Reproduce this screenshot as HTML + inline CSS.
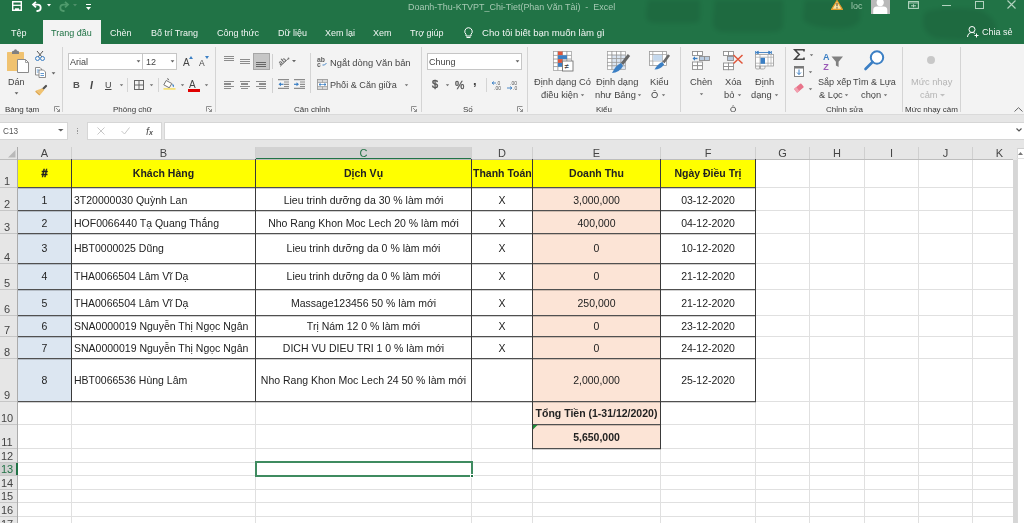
<!DOCTYPE html><html><head><meta charset="utf-8"><style>
html,body{margin:0;padding:0}
body{width:1024px;height:523px;overflow:hidden;position:relative;background:#e6e6e6;font-family:"Liberation Sans",sans-serif}
.t{position:absolute;white-space:nowrap;will-change:transform}
.b{position:absolute;box-sizing:border-box}
.s{position:absolute;overflow:visible}
</style></head><body>
<div class="b" style="left:0px;top:0px;width:1024px;height:44px;background:#217346"></div>
<svg class="s" style="left:600px;top:0px" width="424" height="44" viewBox="0 0 424 44"><defs><filter id="bl"><feGaussianBlur stdDeviation="2"/></filter></defs><g fill="#000" opacity="0.075" filter="url(#bl)"><path d="M48 0 H100 V18 Q100 23 92 23 H56 Q46 23 46 15Z"/><path d="M115 0 H183 V25 Q183 32 170 32 H125 Q113 32 113 22Z"/><path d="M205 0 H260 V20 Q255 30 230 28 Q205 26 203 18Z"/><path d="M325 12 Q345 5 380 10 Q400 20 395 35 Q370 42 335 38 Q318 30 325 12Z"/></g></svg>
<svg class="s" style="left:12px;top:1px" width="10" height="10" viewBox="0 0 10 10"><path d="M0.7 0.7 H9.3 V9.3 H0.7Z" fill="none" stroke="#fff" stroke-width="1.4"/><path d="M0.7 4.3 H9.3" stroke="#fff" stroke-width="1.3"/><rect x="3" y="7.3" width="4" height="2" fill="#fff"/></svg>
<svg class="s" style="left:32px;top:1px" width="11" height="10" viewBox="0 0 11 10"><path d="M4 0.8 L1 3.6 L4 6.4" fill="none" stroke="#fff" stroke-width="1.8"/><path d="M1.5 3.6 H5.5 A3.2 3.2 0 0 1 5.5 10 H4.5" fill="none" stroke="#fff" stroke-width="1.8"/></svg>
<svg class="s" style="left:47px;top:4px" width="4" height="3" viewBox="0 0 4 3"><path d="M0 0 H4 L2 2.5Z" fill="#fff"/></svg>
<svg class="s" style="left:58px;top:1px" width="11" height="10" viewBox="0 0 11 10"><path d="M7 0.8 L10 3.6 L7 6.4" fill="none" stroke="#4f9a6c" stroke-width="1.8"/><path d="M9.5 3.6 H5.5 A3.2 3.2 0 0 0 5.5 10 H6.5" fill="none" stroke="#4f9a6c" stroke-width="1.8"/></svg>
<svg class="s" style="left:73px;top:4px" width="4" height="3" viewBox="0 0 4 3"><path d="M0 0 H4 L2 2.5Z" fill="#4f8f6a"/></svg>
<svg class="s" style="left:86px;top:4px" width="5" height="7" viewBox="0 0 5 7"><path d="M0 0.5 H5" stroke="#fff" stroke-width="1"/><path d="M0 3 H5 L2.5 6Z" fill="#fff"/></svg>
<div class="t" style="left:408px;top:1.0px;font-size:8.95px;line-height:12px;color:#a6c9b3;">Doanh-Thu-KTVPT_Chi-Tiet(Phan Văn Tài)&nbsp; -&nbsp; Excel</div>
<svg class="s" style="left:831px;top:0px" width="12" height="10" viewBox="0 0 12 10"><path d="M6 0.6 L11.4 9.4 H0.6Z" fill="#f7e3a8" stroke="#e39a2a" stroke-width="1.2" stroke-linejoin="round"/><path d="M6 3 V6.3 M6 7.3 V8.4" stroke="#6b5a3a" stroke-width="1.2"/></svg>
<div class="t" style="left:851px;top:0.0px;font-size:9px;line-height:12px;color:#9cc8ac;">loc</div>
<div class="b" style="left:871px;top:0px;width:19px;height:14px;background:#b9b9b9"></div>
<svg class="s" style="left:871px;top:0px" width="19" height="14" viewBox="0 0 19 14"><circle cx="9.2" cy="2.6" r="3.6" fill="#fff"/><path d="M2.2 14 V10 Q2.2 6.5 6 6.5 H12.5 Q16.3 6.5 16.3 10 V14Z" fill="#fff"/></svg>
<svg class="s" style="left:908px;top:1px" width="11" height="8" viewBox="0 0 11 8"><rect x="0.6" y="0.6" width="9.8" height="6.8" fill="none" stroke="#b5d6c1" stroke-width="1.1"/><path d="M0.6 2 H10.4" stroke="#b5d6c1" stroke-width="0.8"/><path d="M3 4.8 H8 M5.5 3.3 V6.3" stroke="#b5d6c1" stroke-width="1"/></svg>
<div class="b" style="left:942px;top:5px;width:9px;height:1px;background:#b3d2bf"></div>
<div class="b" style="left:975px;top:1px;width:9px;height:8px;border:1px solid #b3d2bf"></div>
<svg class="s" style="left:1007px;top:0px" width="9" height="9" viewBox="0 0 9 9"><path d="M0.5 0.5 L8.5 8.5 M8.5 0.5 L0.5 8.5" stroke="#b3d2bf" stroke-width="1.1"/></svg>
<div class="b" style="left:43px;top:20px;width:58px;height:24px;background:#f3f3f3"></div>
<div class="t" style="left:10.7px;top:27.0px;font-size:9px;line-height:12px;color:#f0f5f2;">Tệp</div>
<div class="t" style="left:51.2px;top:27.0px;font-size:9px;line-height:12px;color:#217346;">Trang đầu</div>
<div class="t" style="left:110.4px;top:27.0px;font-size:9px;line-height:12px;color:#f0f5f2;">Chèn</div>
<div class="t" style="left:150.8px;top:27.0px;font-size:9px;line-height:12px;color:#f0f5f2;">Bố trí Trang</div>
<div class="t" style="left:216.7px;top:27.0px;font-size:9px;line-height:12px;color:#f0f5f2;">Công thức</div>
<div class="t" style="left:278.2px;top:27.0px;font-size:9px;line-height:12px;color:#f0f5f2;">Dữ liệu</div>
<div class="t" style="left:325px;top:27.0px;font-size:9px;line-height:12px;color:#f0f5f2;">Xem lại</div>
<div class="t" style="left:373.1px;top:27.0px;font-size:9px;line-height:12px;color:#f0f5f2;">Xem</div>
<div class="t" style="left:410px;top:27.0px;font-size:9px;line-height:12px;color:#f0f5f2;">Trợ giúp</div>
<svg class="s" style="left:464px;top:27px" width="9" height="12" viewBox="0 0 9 12"><path d="M4.5 0.7 A3.8 3.8 0 0 1 7 7.3 V9 H2 V7.3 A3.8 3.8 0 0 1 4.5 0.7Z" fill="none" stroke="#fff" stroke-width="1"/><path d="M2.5 10.5 H6.5" stroke="#fff" stroke-width="1"/></svg>
<div class="t" style="left:481.5px;top:26.5px;font-size:9.6px;line-height:12px;color:#f0f5f2;">Cho tôi biết bạn muốn làm gì</div>
<svg class="s" style="left:967px;top:26px" width="12" height="12" viewBox="0 0 12 12"><circle cx="5" cy="3.5" r="3" fill="none" stroke="#fff" stroke-width="1"/><path d="M0.5 11 Q1 6.5 5 6.5 Q7 6.5 8 7.5" fill="none" stroke="#fff" stroke-width="1"/><path d="M9.5 7.5 V11.5 M7.5 9.5 H11.5" stroke="#fff" stroke-width="1"/></svg>
<div class="t" style="left:981.7px;top:26.200000000000003px;font-size:9px;line-height:12px;color:#f0f5f2;">Chia sẻ</div>
<div class="b" style="left:0px;top:44px;width:1024px;height:71px;background:#f3f3f3;border-bottom:1px solid #dadada"></div>
<div class="b" style="left:62px;top:47px;width:1px;height:65px;background:#d4d4d4"></div>
<div class="b" style="left:215px;top:47px;width:1px;height:65px;background:#d4d4d4"></div>
<div class="b" style="left:421px;top:47px;width:1px;height:65px;background:#d4d4d4"></div>
<div class="b" style="left:527px;top:47px;width:1px;height:65px;background:#d4d4d4"></div>
<div class="b" style="left:680px;top:47px;width:1px;height:65px;background:#d4d4d4"></div>
<div class="b" style="left:785px;top:47px;width:1px;height:65px;background:#d4d4d4"></div>
<div class="b" style="left:902px;top:47px;width:1px;height:65px;background:#d4d4d4"></div>
<div class="b" style="left:960px;top:47px;width:1px;height:65px;background:#d4d4d4"></div>
<div class="t" style="left:5px;top:105.0px;font-size:8px;line-height:10px;color:#383838;">Bảng tạm</div>
<div class="t" style="left:112.8px;top:105.0px;font-size:8px;line-height:10px;color:#383838;">Phông chữ</div>
<div class="t" style="left:293.8px;top:105.0px;font-size:8px;line-height:10px;color:#383838;">Căn chỉnh</div>
<div class="t" style="left:463px;top:105.0px;font-size:8px;line-height:10px;color:#383838;">Số</div>
<div class="t" style="left:596px;top:105.0px;font-size:8px;line-height:10px;color:#383838;">Kiểu</div>
<div class="t" style="left:730px;top:105.0px;font-size:8px;line-height:10px;color:#383838;">Ô</div>
<div class="t" style="left:826px;top:105.0px;font-size:8px;line-height:10px;color:#383838;">Chỉnh sửa</div>
<div class="t" style="left:905px;top:105.0px;font-size:8px;line-height:10px;color:#383838;">Mức nhạy cảm</div>
<svg class="s" style="left:53.5px;top:105.5px" width="6" height="6" viewBox="0 0 6 6"><path d="M0.5 5.5 V0.5 H5.5" fill="none" stroke="#777" stroke-width="0.8"/><path d="M2 2 L5.5 5.5 M5.5 3 V5.5 H3" fill="none" stroke="#777" stroke-width="0.8"/></svg>
<svg class="s" style="left:205.5px;top:105.5px" width="6" height="6" viewBox="0 0 6 6"><path d="M0.5 5.5 V0.5 H5.5" fill="none" stroke="#777" stroke-width="0.8"/><path d="M2 2 L5.5 5.5 M5.5 3 V5.5 H3" fill="none" stroke="#777" stroke-width="0.8"/></svg>
<svg class="s" style="left:410.5px;top:105.5px" width="6" height="6" viewBox="0 0 6 6"><path d="M0.5 5.5 V0.5 H5.5" fill="none" stroke="#777" stroke-width="0.8"/><path d="M2 2 L5.5 5.5 M5.5 3 V5.5 H3" fill="none" stroke="#777" stroke-width="0.8"/></svg>
<svg class="s" style="left:516.5px;top:105.5px" width="6" height="6" viewBox="0 0 6 6"><path d="M0.5 5.5 V0.5 H5.5" fill="none" stroke="#777" stroke-width="0.8"/><path d="M2 2 L5.5 5.5 M5.5 3 V5.5 H3" fill="none" stroke="#777" stroke-width="0.8"/></svg>
<svg class="s" style="left:7px;top:49px" width="22" height="25" viewBox="0 0 22 25"><rect x="0" y="3" width="17" height="19" rx="0.5" fill="#f0c270"/><path d="M5 5 V3 Q5 1.8 6.5 1.8 H7 Q7 0.3 8.5 0.3 Q10 0.3 10 1.8 H10.5 Q12 1.8 12 3 V5Z" fill="#808080"/><path d="M10.5 10.5 H18.5 L21.5 13.5 V23.5 H10.5Z" fill="#fff" stroke="#8a8a8a" stroke-width="1"/><path d="M18.5 10.5 V13.5 H21.5" fill="none" stroke="#8a8a8a" stroke-width="0.8"/></svg>
<div class="t" style="left:8.4px;top:76.0px;font-size:9px;line-height:12px;color:#444;">Dán</div>
<svg class="s" style="left:14px;top:92px" width="5" height="3" viewBox="0 0 5 3"><path d="M0.6 0.2 H4.4 L2.5 2.4Z" fill="#606060"/></svg>
<svg class="s" style="left:35px;top:51px" width="10" height="10" viewBox="0 0 10 10"><path d="M2 0 L7 6 M8 0 L3 6" stroke="#555" stroke-width="1"/><circle cx="2.5" cy="7.5" r="2" fill="none" stroke="#3b7fc4" stroke-width="1"/><circle cx="7.5" cy="7.5" r="2" fill="none" stroke="#3b7fc4" stroke-width="1"/></svg>
<svg class="s" style="left:35px;top:67px" width="11" height="11" viewBox="0 0 11 11"><path d="M0.5 0.5 H5 L6.5 2 V8 H0.5Z" fill="#fff" stroke="#808080" stroke-width="0.9"/><path d="M4 3 H8.5 L10.5 5 V10.5 H4Z" fill="#fff" stroke="#808080" stroke-width="0.9"/><path d="M1.8 3 H4 M1.8 5 H3.5 M5.5 6.5 H9 M5.5 8.5 H9" stroke="#3b7fc4" stroke-width="0.8"/></svg>
<svg class="s" style="left:51px;top:72px" width="5" height="3" viewBox="0 0 5 3"><path d="M0.6 0.2 H4.4 L2.5 2.4Z" fill="#606060"/></svg>
<svg class="s" style="left:35px;top:85px" width="12" height="11" viewBox="0 0 12 11"><path d="M11 1 L7 5" stroke="#505050" stroke-width="2.2" stroke-linecap="round"/><path d="M7.5 3.3 L9.2 5 L5.5 9.5 L1 5.5Z" fill="#f0c270"/><path d="M1 5.5 L5.5 9.5 L4.3 10.5 L0.2 6.8Z" fill="#e0a850"/></svg>
<div class="b" style="left:68px;top:53px;width:75px;height:17px;background:#fff;border:1px solid #c6c6c6"></div>
<div class="b" style="left:142px;top:53px;width:35px;height:17px;background:#fff;border:1px solid #c6c6c6"></div>
<div class="t" style="left:70px;top:56.0px;font-size:9px;line-height:12px;color:#444;">Arial</div>
<div class="t" style="left:146px;top:56.0px;font-size:9px;line-height:12px;color:#444;">12</div>
<svg class="s" style="left:136px;top:60px" width="5" height="3" viewBox="0 0 5 3"><path d="M0.6 0.2 H4.4 L2.5 2.4Z" fill="#606060"/></svg>
<svg class="s" style="left:170px;top:60px" width="5" height="3" viewBox="0 0 5 3"><path d="M0.6 0.2 H4.4 L2.5 2.4Z" fill="#606060"/></svg>
<div class="t" style="left:182.5px;top:55.5px;font-size:10px;line-height:13px;color:#444;">A</div>
<svg class="s" style="left:189px;top:56px" width="4" height="3" viewBox="0 0 4 3"><path d="M0 3 L2 0 L4 3Z" fill="#3b7fc4"/></svg>
<div class="t" style="left:199px;top:57.5px;font-size:8.5px;line-height:11px;color:#444;">A</div>
<svg class="s" style="left:205px;top:56px" width="4" height="3" viewBox="0 0 4 3"><path d="M0 0 L2 3 L4 0Z" fill="#3b7fc4"/></svg>
<div class="t" style="left:72.5px;top:79.0px;font-size:9.5px;line-height:12px;color:#555;font-weight:bold;">B</div>
<div class="t" style="left:90px;top:78.0px;font-size:10.5px;line-height:14px;color:#444;font-weight:bold;font-family:"Liberation Serif";"><i>I</i></div>
<div class="t" style="left:105px;top:79.0px;font-size:9px;line-height:12px;color:#444;"><u>U</u></div>
<svg class="s" style="left:119px;top:84px" width="5" height="3" viewBox="0 0 5 3"><path d="M0.8 0.3 H4.2 L2.5 2.3Z" fill="#707070"/></svg>
<svg class="s" style="left:149px;top:84px" width="5" height="3" viewBox="0 0 5 3"><path d="M0.8 0.3 H4.2 L2.5 2.3Z" fill="#707070"/></svg>
<svg class="s" style="left:180px;top:84px" width="5" height="3" viewBox="0 0 5 3"><path d="M0.8 0.3 H4.2 L2.5 2.3Z" fill="#707070"/></svg>
<svg class="s" style="left:204px;top:84px" width="5" height="3" viewBox="0 0 5 3"><path d="M0.8 0.3 H4.2 L2.5 2.3Z" fill="#707070"/></svg>
<div class="b" style="left:127px;top:78px;width:1px;height:14px;background:#d4d4d4"></div>
<div class="b" style="left:158px;top:78px;width:1px;height:14px;background:#d4d4d4"></div>
<svg class="s" style="left:134px;top:80px" width="10" height="10" viewBox="0 0 10 10"><rect x="0.5" y="0.5" width="9" height="9" fill="none" stroke="#666" stroke-width="1"/><path d="M5 0.5 V9.5 M0.5 5 H9.5" stroke="#666" stroke-width="1"/></svg>
<svg class="s" style="left:163px;top:78px" width="13" height="12" viewBox="0 0 13 12"><path d="M4 0.8 Q5.5 0.3 5.8 2.2" fill="none" stroke="#666" stroke-width="0.9"/><path d="M3.2 2.5 L8.8 5.5 L6.3 9.8 L0.8 6.8Z" fill="#fff" stroke="#666" stroke-width="0.9"/><path d="M9.3 5.8 Q12 7.5 10.5 9.3 Q9.3 8.5 9.3 5.8Z" fill="#3b7fc4"/><rect x="0.5" y="10" width="12" height="1.8" fill="#f5e27a"/></svg>
<div class="t" style="left:189px;top:77.5px;font-size:10px;line-height:13px;color:#444;">A</div>
<div class="b" style="left:188px;top:89px;width:12px;height:3px;background:#e00000"></div>
<div class="b" style="left:224px;top:55.6px;width:9.5px;height:1.3px;background:#8c8c8c"></div><div class="b" style="left:224px;top:57.8px;width:9.5px;height:1.3px;background:#8c8c8c"></div><div class="b" style="left:224px;top:60px;width:9.5px;height:1.3px;background:#8c8c8c"></div>
<div class="b" style="left:240.2px;top:58.6px;width:9.5px;height:1.3px;background:#8c8c8c"></div><div class="b" style="left:240.2px;top:60.8px;width:9.5px;height:1.3px;background:#8c8c8c"></div><div class="b" style="left:240.2px;top:63px;width:9.5px;height:1.3px;background:#8c8c8c"></div>
<div class="b" style="left:253px;top:53px;width:16.5px;height:17px;background:#c6c6c6;border:1px solid #a6a6a6"></div>
<div class="b" style="left:256.3px;top:62px;width:9.8px;height:1.3px;background:#666"></div><div class="b" style="left:256.3px;top:64px;width:9.8px;height:1.3px;background:#666"></div><div class="b" style="left:256.3px;top:66.2px;width:9.8px;height:1.3px;background:#666"></div>
<div class="b" style="left:272px;top:54px;width:1px;height:15px;background:#d0d0d0"></div>
<svg class="s" style="left:277px;top:55px" width="20" height="12" viewBox="0 0 20 12"><g transform="rotate(-40 6 6)"><text x="1" y="8" font-size="7" fill="#666" font-family="Liberation Sans" font-weight="bold">ab</text></g><path d="M3 11.5 L11.5 3.5" stroke="#777" stroke-width="0.9"/><circle cx="11.5" cy="3.5" r="0.9" fill="#777"/><path d="M15 5 H19 L17 7.3Z" fill="#666"/></svg>
<div class="b" style="left:310px;top:53px;width:1px;height:40px;background:#d4d4d4"></div>
<svg class="s" style="left:317px;top:56px" width="11" height="11" viewBox="0 0 11 11"><text x="0" y="5.6" font-size="6.8" font-weight="bold" fill="#606060" font-family="Liberation Sans">ab</text><text x="0" y="10.6" font-size="6.8" font-weight="bold" fill="#606060" font-family="Liberation Sans">c</text><path d="M5.5 9 H7.5 L9.5 7" fill="none" stroke="#3b7fc4" stroke-width="0.9"/></svg>
<div class="t" style="left:330px;top:56.5px;font-size:9.35px;line-height:12px;color:#444;">Ngắt dòng Văn bản</div>
<div class="b" style="left:224px;top:81.2px;width:9.5px;height:1.3px;background:#8c8c8c"></div><div class="b" style="left:224px;top:83.4px;width:7px;height:1.3px;background:#8c8c8c"></div><div class="b" style="left:224px;top:85.6px;width:9.5px;height:1.3px;background:#8c8c8c"></div><div class="b" style="left:224px;top:87.8px;width:7px;height:1.3px;background:#8c8c8c"></div>
<div class="b" style="left:240.2px;top:81.2px;width:9.5px;height:1.3px;background:#8c8c8c"></div><div class="b" style="left:241.45px;top:83.4px;width:7px;height:1.3px;background:#8c8c8c"></div><div class="b" style="left:240.2px;top:85.6px;width:9.5px;height:1.3px;background:#8c8c8c"></div><div class="b" style="left:241.45px;top:87.8px;width:7px;height:1.3px;background:#8c8c8c"></div>
<div class="b" style="left:256.3px;top:81.2px;width:9.5px;height:1.3px;background:#8c8c8c"></div><div class="b" style="left:258.8px;top:83.4px;width:7px;height:1.3px;background:#8c8c8c"></div><div class="b" style="left:256.3px;top:85.6px;width:9.5px;height:1.3px;background:#8c8c8c"></div><div class="b" style="left:258.8px;top:87.8px;width:7px;height:1.3px;background:#8c8c8c"></div>
<div class="b" style="left:272px;top:78px;width:1px;height:15px;background:#d0d0d0"></div>
<svg class="s" style="left:278px;top:79px" width="11" height="10" viewBox="0 0 11 10"><path d="M0 0.6 H11 M6 3 H11 M6 5.3 H11 M6 7.5 H11 M0 9.4 H11" stroke="#8c8c8c" stroke-width="1.2"/><path d="M0.5 5.3 L3 3.3 V7.3Z" fill="#3b7fc4"/><path d="M2 5.3 H5.5" stroke="#3b7fc4" stroke-width="1.2"/></svg>
<svg class="s" style="left:294px;top:79px" width="11" height="10" viewBox="0 0 11 10"><path d="M0 0.6 H11 M6 3 H11 M6 5.3 H11 M6 7.5 H11 M0 9.4 H11" stroke="#8c8c8c" stroke-width="1.2"/><path d="M5 5.3 L2.5 3.3 V7.3Z" fill="#3b7fc4"/><path d="M0 5.3 H3.5" stroke="#3b7fc4" stroke-width="1.2"/></svg>
<svg class="s" style="left:316.5px;top:79px" width="11" height="11" viewBox="0 0 11 11"><rect x="0.5" y="0.5" width="10" height="10" fill="#fff" stroke="#9a9a9a" stroke-width="0.9"/><rect x="1" y="1" width="9" height="2.5" fill="#d8d8d8"/><rect x="1" y="7.5" width="9" height="2.5" fill="#d8d8d8"/><path d="M0.5 3.5 H10.5 M0.5 7.5 H10.5 M5.5 0.5 V3.5 M5.5 7.5 V10.5" stroke="#9a9a9a" stroke-width="0.7"/><path d="M2 5.5 H9 M2 5.5 L3.3 4.5 V6.5Z M9 5.5 L7.7 4.5 V6.5Z" stroke="#3b7fc4" stroke-width="0.7" fill="#3b7fc4"/></svg>
<div class="t" style="left:330px;top:79.0px;font-size:9.1px;line-height:12px;color:#444;">Phối &amp; Căn giữa</div>
<svg class="s" style="left:404px;top:84px" width="5" height="3" viewBox="0 0 5 3"><path d="M0.8 0.3 H4.2 L2.5 2.3Z" fill="#707070"/></svg>
<div class="b" style="left:426.5px;top:53px;width:95px;height:17px;background:#fff;border:1px solid #c6c6c6"></div>
<div class="t" style="left:429px;top:56.0px;font-size:9px;line-height:12px;color:#444;">Chung</div>
<svg class="s" style="left:515px;top:60px" width="5" height="3" viewBox="0 0 5 3"><path d="M0.6 0.2 H4.4 L2.5 2.4Z" fill="#606060"/></svg>
<svg class="s" style="left:432px;top:79px" width="8" height="11" viewBox="0 0 8 11"><text x="0" y="9.3" font-size="11" fill="#555" stroke="#555" stroke-width="0.45" font-family="Liberation Sans">$</text></svg>
<svg class="s" style="left:445px;top:84px" width="5" height="3" viewBox="0 0 5 3"><path d="M0.8 0.3 H4.2 L2.5 2.3Z" fill="#707070"/></svg>
<svg class="s" style="left:454.5px;top:80px" width="10" height="10" viewBox="0 0 10 10"><text x="0" y="8.5" font-size="10.5" fill="#555" stroke="#555" stroke-width="0.35" font-family="Liberation Sans">%</text></svg>
<div class="t" style="left:473.2px;top:72.0px;font-size:13px;line-height:17px;color:#444;font-weight:bold;">,</div>
<div class="b" style="left:486px;top:78px;width:1px;height:14px;background:#d4d4d4"></div>
<svg class="s" style="left:492px;top:80px" width="12" height="10" viewBox="0 0 12 10"><text x="4" y="4.5" font-size="5" fill="#555" font-family="Liberation Sans">.0</text><text x="2" y="10" font-size="5" fill="#555" font-family="Liberation Sans">.00</text><path d="M0 3 H4 M0 3 L2 1.5 M0 3 L2 4.5" stroke="#3b7fc4" stroke-width="0.9" fill="none"/></svg>
<svg class="s" style="left:507px;top:80px" width="12" height="10" viewBox="0 0 12 10"><text x="3" y="4.5" font-size="5" fill="#555" font-family="Liberation Sans">.00</text><text x="6" y="10" font-size="5" fill="#555" font-family="Liberation Sans">.0</text><path d="M0 8 H5 M5 8 L3 6.5 M5 8 L3 9.5" stroke="#3b7fc4" stroke-width="0.9" fill="none"/></svg>
<svg class="s" style="left:553px;top:51px" width="21" height="21" viewBox="0 0 21 21"><rect x="0.5" y="0.5" width="4.5" height="3.8" fill="#fff" stroke="#9a9a9a" stroke-width="0.7"/><rect x="5.0" y="0.5" width="4.5" height="3.8" fill="#fff" stroke="#9a9a9a" stroke-width="0.7"/><rect x="9.5" y="0.5" width="4.5" height="3.8" fill="#fff" stroke="#9a9a9a" stroke-width="0.7"/><rect x="14.0" y="0.5" width="4.5" height="3.8" fill="#fff" stroke="#9a9a9a" stroke-width="0.7"/><rect x="0.5" y="4.3" width="4.5" height="3.8" fill="#fff" stroke="#9a9a9a" stroke-width="0.7"/><rect x="5.0" y="4.3" width="4.5" height="3.8" fill="#fff" stroke="#9a9a9a" stroke-width="0.7"/><rect x="9.5" y="4.3" width="4.5" height="3.8" fill="#fff" stroke="#9a9a9a" stroke-width="0.7"/><rect x="14.0" y="4.3" width="4.5" height="3.8" fill="#fff" stroke="#9a9a9a" stroke-width="0.7"/><rect x="0.5" y="8.1" width="4.5" height="3.8" fill="#fff" stroke="#9a9a9a" stroke-width="0.7"/><rect x="5.0" y="8.1" width="4.5" height="3.8" fill="#fff" stroke="#9a9a9a" stroke-width="0.7"/><rect x="9.5" y="8.1" width="4.5" height="3.8" fill="#fff" stroke="#9a9a9a" stroke-width="0.7"/><rect x="14.0" y="8.1" width="4.5" height="3.8" fill="#fff" stroke="#9a9a9a" stroke-width="0.7"/><rect x="0.5" y="11.899999999999999" width="4.5" height="3.8" fill="#fff" stroke="#9a9a9a" stroke-width="0.7"/><rect x="5.0" y="11.899999999999999" width="4.5" height="3.8" fill="#fff" stroke="#9a9a9a" stroke-width="0.7"/><rect x="9.5" y="11.899999999999999" width="4.5" height="3.8" fill="#fff" stroke="#9a9a9a" stroke-width="0.7"/><rect x="14.0" y="11.899999999999999" width="4.5" height="3.8" fill="#fff" stroke="#9a9a9a" stroke-width="0.7"/><rect x="0.5" y="15.7" width="4.5" height="3.8" fill="#fff" stroke="#9a9a9a" stroke-width="0.7"/><rect x="5.0" y="15.7" width="4.5" height="3.8" fill="#fff" stroke="#9a9a9a" stroke-width="0.7"/><rect x="9.5" y="15.7" width="4.5" height="3.8" fill="#fff" stroke="#9a9a9a" stroke-width="0.7"/><rect x="14.0" y="15.7" width="4.5" height="3.8" fill="#fff" stroke="#9a9a9a" stroke-width="0.7"/><rect x="5" y="0.5" width="4.5" height="3.8" fill="#e0553a"/><rect x="5" y="4.3" width="9" height="3.8" fill="#3b7fc4"/><rect x="5" y="8.1" width="4.5" height="3.8" fill="#e0553a"/><rect x="5" y="11.9" width="4.5" height="3.8" fill="#3b7fc4"/><rect x="9.5" y="10" width="10.5" height="10" fill="#fff" stroke="#777" stroke-width="0.9"/><text x="11.5" y="18" font-size="8" fill="#333" font-family="Liberation Sans">≠</text></svg>
<div class="t" style="left:534.4px;top:76.0px;font-size:9.3px;line-height:12px;color:#444;">Định dạng Có</div>
<div class="t" style="left:541.4px;top:89.0px;font-size:9.3px;line-height:12px;color:#444;">điều kiện</div>
<svg class="s" style="left:580px;top:94px" width="5" height="3" viewBox="0 0 5 3"><path d="M0.8 0.3 H4.2 L2.5 2.3Z" fill="#707070"/></svg>
<svg class="s" style="left:607px;top:51px" width="24" height="23" viewBox="0 0 24 23"><rect x="0.5" y="0.5" width="4.5" height="3.6" fill="#fff" stroke="#9a9a9a" stroke-width="0.7"/><rect x="5.0" y="0.5" width="4.5" height="3.6" fill="#fff" stroke="#9a9a9a" stroke-width="0.7"/><rect x="9.5" y="0.5" width="4.5" height="3.6" fill="#fff" stroke="#9a9a9a" stroke-width="0.7"/><rect x="14.0" y="0.5" width="4.5" height="3.6" fill="#fff" stroke="#9a9a9a" stroke-width="0.7"/><rect x="0.5" y="4.1" width="4.5" height="3.6" fill="#fff" stroke="#9a9a9a" stroke-width="0.7"/><rect x="5.0" y="4.1" width="4.5" height="3.6" fill="#dbe5f1" stroke="#9a9a9a" stroke-width="0.7"/><rect x="9.5" y="4.1" width="4.5" height="3.6" fill="#dbe5f1" stroke="#9a9a9a" stroke-width="0.7"/><rect x="14.0" y="4.1" width="4.5" height="3.6" fill="#dbe5f1" stroke="#9a9a9a" stroke-width="0.7"/><rect x="0.5" y="7.7" width="4.5" height="3.6" fill="#fff" stroke="#9a9a9a" stroke-width="0.7"/><rect x="5.0" y="7.7" width="4.5" height="3.6" fill="#dbe5f1" stroke="#9a9a9a" stroke-width="0.7"/><rect x="9.5" y="7.7" width="4.5" height="3.6" fill="#dbe5f1" stroke="#9a9a9a" stroke-width="0.7"/><rect x="14.0" y="7.7" width="4.5" height="3.6" fill="#dbe5f1" stroke="#9a9a9a" stroke-width="0.7"/><rect x="0.5" y="11.3" width="4.5" height="3.6" fill="#fff" stroke="#9a9a9a" stroke-width="0.7"/><rect x="5.0" y="11.3" width="4.5" height="3.6" fill="#dbe5f1" stroke="#9a9a9a" stroke-width="0.7"/><rect x="9.5" y="11.3" width="4.5" height="3.6" fill="#dbe5f1" stroke="#9a9a9a" stroke-width="0.7"/><rect x="14.0" y="11.3" width="4.5" height="3.6" fill="#dbe5f1" stroke="#9a9a9a" stroke-width="0.7"/><rect x="0.5" y="14.9" width="4.5" height="3.6" fill="#fff" stroke="#9a9a9a" stroke-width="0.7"/><rect x="5.0" y="14.9" width="4.5" height="3.6" fill="#dbe5f1" stroke="#9a9a9a" stroke-width="0.7"/><rect x="9.5" y="14.9" width="4.5" height="3.6" fill="#dbe5f1" stroke="#9a9a9a" stroke-width="0.7"/><rect x="14.0" y="14.9" width="4.5" height="3.6" fill="#dbe5f1" stroke="#9a9a9a" stroke-width="0.7"/><path d="M22 4 L15 13" stroke="#666" stroke-width="3"/><path d="M14 12 Q9 14 5 22 Q12 22 16 15Z" fill="#3b7fc4"/></svg>
<div class="t" style="left:596px;top:76.0px;font-size:9.3px;line-height:12px;color:#444;">Định dạng</div>
<div class="t" style="left:595.3px;top:89.0px;font-size:9.3px;line-height:12px;color:#444;">như Bảng</div>
<svg class="s" style="left:637px;top:94px" width="5" height="3" viewBox="0 0 5 3"><path d="M0.8 0.3 H4.2 L2.5 2.3Z" fill="#707070"/></svg>
<svg class="s" style="left:649px;top:51px" width="21" height="20" viewBox="0 0 21 20"><rect x="0.5" y="0.5" width="17" height="14" fill="#fff" stroke="#9a9a9a" stroke-width="0.8"/><path d="M0.5 3.5 H17.5 M0.5 10 H17.5 M3.8 0.5 V14.5 M13.5 0.5 V14.5" stroke="#9a9a9a" stroke-width="0.7"/><rect x="4.2" y="3.9" width="9" height="5.8" fill="#c5d9ee"/><path d="M20 4 L14.5 11.5" stroke="#6a6a6a" stroke-width="2.6"/><path d="M13.2 11 Q9 12.5 5.5 18.5 Q11.5 18.5 15.2 13.5Z" fill="#3b7fc4"/></svg>
<div class="t" style="left:649.7px;top:76.0px;font-size:9.3px;line-height:12px;color:#444;">Kiểu</div>
<div class="t" style="left:651px;top:89.0px;font-size:9.3px;line-height:12px;color:#444;">Ô</div>
<svg class="s" style="left:661px;top:94px" width="5" height="3" viewBox="0 0 5 3"><path d="M0.8 0.3 H4.2 L2.5 2.3Z" fill="#707070"/></svg>
<svg class="s" style="left:691.5px;top:51px" width="20" height="19" viewBox="0 0 20 19"><rect x="0.5" y="0.5" width="5" height="4" fill="#fff" stroke="#8f8f8f" stroke-width="0.9"/><rect x="5.5" y="0.5" width="5" height="4" fill="#fff" stroke="#8f8f8f" stroke-width="0.9"/><rect x="7.5" y="5.5" width="5" height="4" fill="#b9cbe0" stroke="#8f8f8f" stroke-width="0.9"/><rect x="12.5" y="5.5" width="5" height="4" fill="#b9cbe0" stroke="#8f8f8f" stroke-width="0.9"/><path d="M0.5 7.5 L3 5.3 V9.7Z" fill="#3b7fc4"/><path d="M2.5 7.5 H5.5" stroke="#3b7fc4" stroke-width="1.4"/><rect x="0.5" y="11" width="5" height="3.7" fill="#fff" stroke="#8f8f8f" stroke-width="0.9"/><rect x="5.5" y="11" width="5" height="3.7" fill="#fff" stroke="#8f8f8f" stroke-width="0.9"/><rect x="0.5" y="14.7" width="5" height="3.7" fill="#fff" stroke="#8f8f8f" stroke-width="0.9"/><rect x="5.5" y="14.7" width="5" height="3.7" fill="#fff" stroke="#8f8f8f" stroke-width="0.9"/></svg>
<div class="t" style="left:690px;top:76.0px;font-size:9.3px;line-height:12px;color:#444;">Chèn</div>
<svg class="s" style="left:699px;top:93px" width="5" height="3" viewBox="0 0 5 3"><path d="M0.8 0.3 H4.2 L2.5 2.3Z" fill="#707070"/></svg>
<svg class="s" style="left:723px;top:51px" width="21" height="19" viewBox="0 0 21 19"><rect x="0.5" y="0.5" width="5" height="4" fill="#fff" stroke="#8f8f8f" stroke-width="0.9"/><rect x="5.5" y="0.5" width="5" height="4" fill="#fff" stroke="#8f8f8f" stroke-width="0.9"/><rect x="4.5" y="5.5" width="6" height="4" fill="#b9cbe0" stroke="#8f8f8f" stroke-width="0.9"/><rect x="0.5" y="12" width="5" height="3.5" fill="#fff" stroke="#8f8f8f" stroke-width="0.9"/><rect x="5.5" y="12" width="5" height="3.5" fill="#fff" stroke="#8f8f8f" stroke-width="0.9"/><rect x="0.5" y="15.5" width="5" height="3.2" fill="#fff" stroke="#8f8f8f" stroke-width="0.9"/><rect x="5.5" y="15.5" width="5" height="3.2" fill="#fff" stroke="#8f8f8f" stroke-width="0.9"/><path d="M10.5 4 L19.5 12.5 M19.5 4 L10.5 12.5" stroke="#e0553a" stroke-width="1.5"/></svg>
<div class="t" style="left:725px;top:76.0px;font-size:9.3px;line-height:12px;color:#444;">Xóa</div>
<div class="t" style="left:724px;top:89.0px;font-size:9.3px;line-height:12px;color:#444;">bỏ</div>
<svg class="s" style="left:737px;top:94px" width="5" height="3" viewBox="0 0 5 3"><path d="M0.8 0.3 H4.2 L2.5 2.3Z" fill="#707070"/></svg>
<svg class="s" style="left:755px;top:51px" width="20" height="21" viewBox="0 0 20 21"><path d="M0.5 0 V3 M16.5 0 V3" stroke="#3b7fc4" stroke-width="0.8"/><path d="M1 1.5 H16 M1 1.5 L3.3 0.2 V2.8Z M16 1.5 L13.7 0.2 V2.8Z" stroke="#3b7fc4" stroke-width="0.9" fill="#3b7fc4"/><rect x="0.5" y="3.5" width="18" height="11.5" fill="#fff" stroke="#9a9a9a" stroke-width="0.8"/><path d="M5 3.5 V15 M13 3.5 V15 M16 3.5 V15 M0.5 6.2 H18.5 M0.5 12.2 H18.5" stroke="#a8a8a8" stroke-width="0.7"/><rect x="5.5" y="6.8" width="4.5" height="6" fill="#3b7fc4"/><path d="M0.5 15 V17 Q0.5 18 2 18 H4.5 V15 M5.5 15 V18 H8.5 Q10 18 10 16.5 V15" fill="none" stroke="#9a9a9a" stroke-width="0.8"/></svg>
<div class="t" style="left:755px;top:76.0px;font-size:9.3px;line-height:12px;color:#444;">Định</div>
<div class="t" style="left:750.6px;top:89.0px;font-size:9.3px;line-height:12px;color:#444;">dạng</div>
<svg class="s" style="left:774px;top:94px" width="5" height="3" viewBox="0 0 5 3"><path d="M0.8 0.3 H4.2 L2.5 2.3Z" fill="#707070"/></svg>
<svg class="s" style="left:794px;top:49px" width="11" height="11" viewBox="0 0 11 11"><path d="M10 2.5 V0.8 H0.8 L5.2 5.5 L0.8 10.2 H10 V8.5" fill="none" stroke="#444" stroke-width="1.6" stroke-linejoin="miter"/></svg>
<svg class="s" style="left:809px;top:54px" width="5" height="3" viewBox="0 0 5 3"><path d="M0.8 0.3 H4.2 L2.5 2.3Z" fill="#707070"/></svg>
<svg class="s" style="left:794px;top:66px" width="10" height="11" viewBox="0 0 10 11"><rect x="0.5" y="0.5" width="9" height="10" fill="#fff" stroke="#777" stroke-width="0.9"/><rect x="0.5" y="0.5" width="9" height="2" fill="#777"/><path d="M5 3.5 V8.5 M3 6.5 L5 8.5 L7 6.5" stroke="#3b7fc4" stroke-width="1" fill="none"/></svg>
<svg class="s" style="left:808px;top:71px" width="5" height="3" viewBox="0 0 5 3"><path d="M0.8 0.3 H4.2 L2.5 2.3Z" fill="#707070"/></svg>
<svg class="s" style="left:794px;top:83px" width="10" height="10" viewBox="0 0 10 10"><g transform="rotate(-40 5 5)"><rect x="0.5" y="2.5" width="9" height="5" rx="0.8" fill="#e8748a"/><rect x="0.5" y="2.5" width="3" height="5" fill="#f2a0b0"/></g></svg>
<svg class="s" style="left:808px;top:88px" width="5" height="3" viewBox="0 0 5 3"><path d="M0.8 0.3 H4.2 L2.5 2.3Z" fill="#707070"/></svg>
<svg class="s" style="left:823px;top:51px" width="21" height="19" viewBox="0 0 21 19"><text x="0" y="8.6" font-size="9" font-weight="bold" fill="#3b7fc4" font-family="Liberation Sans">A</text><text x="0.3" y="18.6" font-size="9" font-weight="bold" fill="#9b59b6" font-family="Liberation Sans">Z</text><path d="M8.5 5.5 H20 L15.6 10.8 V16 L12.9 14.6 V10.8Z" fill="#808080"/></svg>
<div class="t" style="left:817.8px;top:76.0px;font-size:9.1px;line-height:12px;color:#444;">Sắp xếp</div>
<div class="t" style="left:819px;top:89.0px;font-size:9.3px;line-height:12px;color:#444;">&amp; Lọc</div>
<svg class="s" style="left:844px;top:94px" width="5" height="3" viewBox="0 0 5 3"><path d="M0.8 0.3 H4.2 L2.5 2.3Z" fill="#707070"/></svg>
<svg class="s" style="left:863.5px;top:50px" width="21" height="21" viewBox="0 0 21 21"><circle cx="13" cy="7.5" r="6.2" fill="#fff" stroke="#3b7fc4" stroke-width="2"/><path d="M8.5 12 L1.5 19" stroke="#3b7fc4" stroke-width="2.6" stroke-linecap="round"/></svg>
<div class="t" style="left:853.4px;top:76.0px;font-size:9.05px;line-height:12px;color:#444;">Tìm &amp; Lựa</div>
<div class="t" style="left:861px;top:89.0px;font-size:9.3px;line-height:12px;color:#444;">chọn</div>
<svg class="s" style="left:883px;top:94px" width="5" height="3" viewBox="0 0 5 3"><path d="M0.8 0.3 H4.2 L2.5 2.3Z" fill="#707070"/></svg>
<svg class="s" style="left:927px;top:56px" width="8" height="8" viewBox="0 0 8 8"><circle cx="4" cy="4" r="4" fill="#c8c8c8"/></svg>
<div class="t" style="left:911.3px;top:76.0px;font-size:9.3px;line-height:12px;color:#b5b5b5;">Mức nhạy</div>
<div class="t" style="left:920px;top:89.0px;font-size:9.3px;line-height:12px;color:#b5b5b5;">cảm</div>
<svg class="s" style="left:940px;top:94px" width="5" height="3" viewBox="0 0 5 3"><path d="M0 0 H5 L2.5 2.5Z" fill="#c0c0c0"/></svg>
<svg class="s" style="left:1014px;top:107px" width="9" height="5" viewBox="0 0 9 5"><path d="M0.5 4.5 L4.5 0.7 L8.5 4.5" fill="none" stroke="#666" stroke-width="1"/></svg>
<div class="b" style="left:-1px;top:122px;width:69px;height:18px;background:#fff;border:1px solid #d6d6d6"></div>
<div class="t" style="left:3.2px;top:126.0px;font-size:8.2px;line-height:11px;color:#555;">C13</div>
<svg class="s" style="left:57.5px;top:129px" width="6" height="3" viewBox="0 0 6 3"><path d="M0 0 H5.5 L2.75 2.6Z" fill="#606060"/></svg>
<div class="b" style="left:77px;top:127.7px;width:1.2px;height:1.3px;background:#999"></div>
<div class="b" style="left:77px;top:130.4px;width:1.2px;height:1.3px;background:#999"></div>
<div class="b" style="left:77px;top:133.1px;width:1.2px;height:1.3px;background:#999"></div>
<div class="b" style="left:87px;top:122px;width:75px;height:18px;background:#fff;border:1px solid #d6d6d6"></div>
<svg class="s" style="left:97px;top:127px" width="8" height="8" viewBox="0 0 8 8"><path d="M0.5 0.5 L7.5 7.5 M7.5 0.5 L0.5 7.5" stroke="#c8c8c8" stroke-width="1"/></svg>
<svg class="s" style="left:121px;top:127px" width="9" height="8" viewBox="0 0 9 8"><path d="M0.5 4 L3.5 7 L8.5 0.5" fill="none" stroke="#c8c8c8" stroke-width="1"/></svg>
<div class="t" style="left:145.5px;top:124.0px;font-size:10.5px;line-height:14px;color:#555;font-family:"Liberation Serif";"><i>f</i><span style="font-size:7px;font-weight:bold"><i>x</i></span></div>
<div class="b" style="left:164px;top:122px;width:861px;height:18px;background:#fff;border:1px solid #d6d6d6"></div>
<svg class="s" style="left:1016px;top:128px" width="6" height="4" viewBox="0 0 6 4"><path d="M0.5 0.5 L3 3 L5.5 0.5" fill="none" stroke="#555" stroke-width="1.2"/></svg>
<div class="b" style="left:18px;top:160px;width:995px;height:400px;background:#fff"></div>
<div class="b" style="left:0px;top:146px;width:1013px;height:14px;background:#e6e6e6"></div>
<div class="b" style="left:256px;top:147px;width:215px;height:12px;background:#d2d2d2"></div>
<div class="b" style="left:256px;top:158px;width:215px;height:2px;background:#217346"></div>
<div class="t" style="left:18px;top:146.0px;font-size:11px;line-height:14px;color:#444;width:53px;text-align:center;">A</div>
<div class="b" style="left:71px;top:147px;width:1px;height:13px;background:#cfcfcf"></div>
<div class="t" style="left:72px;top:146.0px;font-size:11px;line-height:14px;color:#444;width:183px;text-align:center;">B</div>
<div class="b" style="left:255px;top:147px;width:1px;height:13px;background:#cfcfcf"></div>
<div class="t" style="left:256px;top:146.0px;font-size:11px;line-height:14px;color:#217346;width:215px;text-align:center;">C</div>
<div class="b" style="left:471px;top:147px;width:1px;height:13px;background:#cfcfcf"></div>
<div class="t" style="left:472px;top:146.0px;font-size:11px;line-height:14px;color:#444;width:60px;text-align:center;">D</div>
<div class="b" style="left:532px;top:147px;width:1px;height:13px;background:#cfcfcf"></div>
<div class="t" style="left:533px;top:146.0px;font-size:11px;line-height:14px;color:#444;width:127px;text-align:center;">E</div>
<div class="b" style="left:660px;top:147px;width:1px;height:13px;background:#cfcfcf"></div>
<div class="t" style="left:661px;top:146.0px;font-size:11px;line-height:14px;color:#444;width:94px;text-align:center;">F</div>
<div class="b" style="left:755px;top:147px;width:1px;height:13px;background:#cfcfcf"></div>
<div class="t" style="left:756px;top:146.0px;font-size:11px;line-height:14px;color:#444;width:53px;text-align:center;">G</div>
<div class="b" style="left:809px;top:147px;width:1px;height:13px;background:#cfcfcf"></div>
<div class="t" style="left:810px;top:146.0px;font-size:11px;line-height:14px;color:#444;width:54px;text-align:center;">H</div>
<div class="b" style="left:864px;top:147px;width:1px;height:13px;background:#cfcfcf"></div>
<div class="t" style="left:865px;top:146.0px;font-size:11px;line-height:14px;color:#444;width:53px;text-align:center;">I</div>
<div class="b" style="left:918px;top:147px;width:1px;height:13px;background:#cfcfcf"></div>
<div class="t" style="left:919px;top:146.0px;font-size:11px;line-height:14px;color:#444;width:53px;text-align:center;">J</div>
<div class="b" style="left:972px;top:147px;width:1px;height:13px;background:#cfcfcf"></div>
<div class="t" style="left:973px;top:146.0px;font-size:11px;line-height:14px;color:#444;width:53px;text-align:center;">K</div>
<div class="b" style="left:1026px;top:147px;width:1px;height:13px;background:#cfcfcf"></div>
<div class="b" style="left:0px;top:159px;width:1013px;height:1px;background:#bdbdbd"></div>
<div class="b" style="left:0px;top:160px;width:17px;height:370px;background:#e6e6e6"></div>
<div class="b" style="left:17px;top:147px;width:1px;height:380px;background:#ababab"></div>
<div class="t" style="left:-13.5px;top:175.0px;font-size:11px;line-height:12px;color:#444;width:40px;text-align:center;">1</div>
<div class="b" style="left:0px;top:187px;width:17px;height:1px;background:#c6c6c6"></div>
<div class="t" style="left:-13.5px;top:198.0px;font-size:11px;line-height:12px;color:#444;width:40px;text-align:center;">2</div>
<div class="b" style="left:0px;top:210px;width:17px;height:1px;background:#c6c6c6"></div>
<div class="t" style="left:-13.5px;top:221.0px;font-size:11px;line-height:12px;color:#444;width:40px;text-align:center;">3</div>
<div class="b" style="left:0px;top:233px;width:17px;height:1px;background:#c6c6c6"></div>
<div class="t" style="left:-13.5px;top:251.0px;font-size:11px;line-height:12px;color:#444;width:40px;text-align:center;">4</div>
<div class="b" style="left:0px;top:263px;width:17px;height:1px;background:#c6c6c6"></div>
<div class="t" style="left:-13.5px;top:277.0px;font-size:11px;line-height:12px;color:#444;width:40px;text-align:center;">5</div>
<div class="b" style="left:0px;top:289px;width:17px;height:1px;background:#c6c6c6"></div>
<div class="t" style="left:-13.5px;top:303.0px;font-size:11px;line-height:12px;color:#444;width:40px;text-align:center;">6</div>
<div class="b" style="left:0px;top:315px;width:17px;height:1px;background:#c6c6c6"></div>
<div class="t" style="left:-13.5px;top:324.0px;font-size:11px;line-height:12px;color:#444;width:40px;text-align:center;">7</div>
<div class="b" style="left:0px;top:336px;width:17px;height:1px;background:#c6c6c6"></div>
<div class="t" style="left:-13.5px;top:346.0px;font-size:11px;line-height:12px;color:#444;width:40px;text-align:center;">8</div>
<div class="b" style="left:0px;top:358px;width:17px;height:1px;background:#c6c6c6"></div>
<div class="t" style="left:-13.5px;top:389.0px;font-size:11px;line-height:12px;color:#444;width:40px;text-align:center;">9</div>
<div class="b" style="left:0px;top:401px;width:17px;height:1px;background:#c6c6c6"></div>
<div class="t" style="left:-13.5px;top:412.0px;font-size:11px;line-height:12px;color:#444;width:40px;text-align:center;">10</div>
<div class="b" style="left:0px;top:424px;width:17px;height:1px;background:#c6c6c6"></div>
<div class="t" style="left:-13.5px;top:436.0px;font-size:11px;line-height:12px;color:#444;width:40px;text-align:center;">11</div>
<div class="b" style="left:0px;top:448px;width:17px;height:1px;background:#c6c6c6"></div>
<div class="t" style="left:-13.5px;top:450.0px;font-size:11px;line-height:12px;color:#444;width:40px;text-align:center;">12</div>
<div class="b" style="left:0px;top:462px;width:17px;height:1px;background:#c6c6c6"></div>
<div class="b" style="left:0px;top:463px;width:17px;height:12px;background:#d2d2d2"></div>
<div class="b" style="left:16px;top:463px;width:2px;height:12px;background:#217346"></div>
<div class="t" style="left:-13.5px;top:463.0px;font-size:11px;line-height:12px;color:#217346;width:40px;text-align:center;">13</div>
<div class="b" style="left:0px;top:475px;width:17px;height:1px;background:#c6c6c6"></div>
<div class="t" style="left:-13.5px;top:477.0px;font-size:11px;line-height:12px;color:#444;width:40px;text-align:center;">14</div>
<div class="b" style="left:0px;top:489px;width:17px;height:1px;background:#c6c6c6"></div>
<div class="t" style="left:-13.5px;top:490.0px;font-size:11px;line-height:12px;color:#444;width:40px;text-align:center;">15</div>
<div class="b" style="left:0px;top:502px;width:17px;height:1px;background:#c6c6c6"></div>
<div class="t" style="left:-13.5px;top:504.0px;font-size:11px;line-height:12px;color:#444;width:40px;text-align:center;">16</div>
<div class="b" style="left:0px;top:516px;width:17px;height:1px;background:#c6c6c6"></div>
<div class="t" style="left:-13.5px;top:518.0px;font-size:11px;line-height:12px;color:#444;width:40px;text-align:center;">17</div>
<div class="b" style="left:0px;top:530px;width:17px;height:1px;background:#c6c6c6"></div>
<svg class="s" style="left:8px;top:150px" width="8" height="8" viewBox="0 0 8 8"><path d="M7.5 0 V7.5 H0Z" fill="#b9b9b9"/></svg>
<div class="b" style="left:71px;top:160px;width:1px;height:370px;background:#e0e0e0"></div>
<div class="b" style="left:255px;top:160px;width:1px;height:370px;background:#e0e0e0"></div>
<div class="b" style="left:471px;top:160px;width:1px;height:370px;background:#e0e0e0"></div>
<div class="b" style="left:532px;top:160px;width:1px;height:370px;background:#e0e0e0"></div>
<div class="b" style="left:660px;top:160px;width:1px;height:370px;background:#e0e0e0"></div>
<div class="b" style="left:755px;top:160px;width:1px;height:370px;background:#e0e0e0"></div>
<div class="b" style="left:809px;top:160px;width:1px;height:370px;background:#e0e0e0"></div>
<div class="b" style="left:864px;top:160px;width:1px;height:370px;background:#e0e0e0"></div>
<div class="b" style="left:918px;top:160px;width:1px;height:370px;background:#e0e0e0"></div>
<div class="b" style="left:972px;top:160px;width:1px;height:370px;background:#e0e0e0"></div>
<div class="b" style="left:1013px;top:160px;width:1px;height:370px;background:#e0e0e0"></div>
<div class="b" style="left:18px;top:187px;width:995px;height:1px;background:#e0e0e0"></div>
<div class="b" style="left:18px;top:210px;width:995px;height:1px;background:#e0e0e0"></div>
<div class="b" style="left:18px;top:233px;width:995px;height:1px;background:#e0e0e0"></div>
<div class="b" style="left:18px;top:263px;width:995px;height:1px;background:#e0e0e0"></div>
<div class="b" style="left:18px;top:289px;width:995px;height:1px;background:#e0e0e0"></div>
<div class="b" style="left:18px;top:315px;width:995px;height:1px;background:#e0e0e0"></div>
<div class="b" style="left:18px;top:336px;width:995px;height:1px;background:#e0e0e0"></div>
<div class="b" style="left:18px;top:358px;width:995px;height:1px;background:#e0e0e0"></div>
<div class="b" style="left:18px;top:401px;width:995px;height:1px;background:#e0e0e0"></div>
<div class="b" style="left:18px;top:424px;width:995px;height:1px;background:#e0e0e0"></div>
<div class="b" style="left:18px;top:448px;width:995px;height:1px;background:#e0e0e0"></div>
<div class="b" style="left:18px;top:462px;width:995px;height:1px;background:#e0e0e0"></div>
<div class="b" style="left:18px;top:475px;width:995px;height:1px;background:#e0e0e0"></div>
<div class="b" style="left:18px;top:489px;width:995px;height:1px;background:#e0e0e0"></div>
<div class="b" style="left:18px;top:502px;width:995px;height:1px;background:#e0e0e0"></div>
<div class="b" style="left:18px;top:516px;width:995px;height:1px;background:#e0e0e0"></div>
<div class="b" style="left:18px;top:530px;width:995px;height:1px;background:#e0e0e0"></div>
<div class="b" style="left:18px;top:160px;width:737px;height:27px;background:#ffff00"></div>
<div class="b" style="left:18px;top:188px;width:53px;height:22px;background:#dce6f1"></div>
<div class="b" style="left:533px;top:188px;width:127px;height:22px;background:#fce4d6"></div>
<div class="b" style="left:18px;top:211px;width:53px;height:22px;background:#dce6f1"></div>
<div class="b" style="left:533px;top:211px;width:127px;height:22px;background:#fce4d6"></div>
<div class="b" style="left:18px;top:234px;width:53px;height:29px;background:#dce6f1"></div>
<div class="b" style="left:533px;top:234px;width:127px;height:29px;background:#fce4d6"></div>
<div class="b" style="left:18px;top:264px;width:53px;height:25px;background:#dce6f1"></div>
<div class="b" style="left:533px;top:264px;width:127px;height:25px;background:#fce4d6"></div>
<div class="b" style="left:18px;top:290px;width:53px;height:25px;background:#dce6f1"></div>
<div class="b" style="left:533px;top:290px;width:127px;height:25px;background:#fce4d6"></div>
<div class="b" style="left:18px;top:316px;width:53px;height:20px;background:#dce6f1"></div>
<div class="b" style="left:533px;top:316px;width:127px;height:20px;background:#fce4d6"></div>
<div class="b" style="left:18px;top:337px;width:53px;height:21px;background:#dce6f1"></div>
<div class="b" style="left:533px;top:337px;width:127px;height:21px;background:#fce4d6"></div>
<div class="b" style="left:18px;top:359px;width:53px;height:42px;background:#dce6f1"></div>
<div class="b" style="left:533px;top:359px;width:127px;height:42px;background:#fce4d6"></div>
<div class="b" style="left:533px;top:402px;width:127px;height:22px;background:#fce4d6"></div>
<div class="b" style="left:533px;top:425px;width:127px;height:23px;background:#fce4d6"></div>
<div class="b" style="left:18px;top:187px;width:738px;height:1px;background:#505050;box-shadow:0 1px 0 rgba(0,0,0,0.18)"></div>
<div class="b" style="left:18px;top:210px;width:738px;height:1px;background:#505050;box-shadow:0 1px 0 rgba(0,0,0,0.18)"></div>
<div class="b" style="left:18px;top:233px;width:738px;height:1px;background:#505050;box-shadow:0 1px 0 rgba(0,0,0,0.18)"></div>
<div class="b" style="left:18px;top:263px;width:738px;height:1px;background:#505050;box-shadow:0 1px 0 rgba(0,0,0,0.18)"></div>
<div class="b" style="left:18px;top:289px;width:738px;height:1px;background:#505050;box-shadow:0 1px 0 rgba(0,0,0,0.18)"></div>
<div class="b" style="left:18px;top:315px;width:738px;height:1px;background:#505050;box-shadow:0 1px 0 rgba(0,0,0,0.18)"></div>
<div class="b" style="left:18px;top:336px;width:738px;height:1px;background:#505050;box-shadow:0 1px 0 rgba(0,0,0,0.18)"></div>
<div class="b" style="left:18px;top:358px;width:738px;height:1px;background:#505050;box-shadow:0 1px 0 rgba(0,0,0,0.18)"></div>
<div class="b" style="left:18px;top:401px;width:738px;height:1px;background:#505050;box-shadow:0 1px 0 rgba(0,0,0,0.18)"></div>
<div class="b" style="left:71px;top:159px;width:1px;height:243px;background:#3a3a3a"></div>
<div class="b" style="left:255px;top:159px;width:1px;height:243px;background:#3a3a3a"></div>
<div class="b" style="left:471px;top:159px;width:1px;height:243px;background:#3a3a3a"></div>
<div class="b" style="left:532px;top:159px;width:1px;height:243px;background:#3a3a3a"></div>
<div class="b" style="left:660px;top:159px;width:1px;height:243px;background:#3a3a3a"></div>
<div class="b" style="left:755px;top:159px;width:1px;height:243px;background:#3a3a3a"></div>
<div class="b" style="left:71px;top:159px;width:1px;height:243px;background:#3a3a3a"></div>
<div class="b" style="left:532px;top:424px;width:129px;height:1px;background:#505050;box-shadow:0 1px 0 rgba(0,0,0,0.18)"></div>
<div class="b" style="left:532px;top:448px;width:129px;height:1px;background:#505050;box-shadow:0 1px 0 rgba(0,0,0,0.18)"></div>
<div class="b" style="left:532px;top:401px;width:1px;height:48px;background:#3a3a3a"></div>
<div class="b" style="left:660px;top:401px;width:1px;height:48px;background:#3a3a3a"></div>
<svg class="s" style="left:533px;top:425px" width="5" height="5" viewBox="0 0 5 5"><path d="M0 0 H4.5 L0 4.5Z" fill="#1e8c3a"/></svg>
<div class="t" style="left:18px;top:166.0px;font-size:11px;line-height:14px;color:#222;font-weight:bold;width:53px;text-align:center;-webkit-text-stroke:0.5px #222;">#</div>
<div class="t" style="left:72px;top:166.0px;font-size:10.5px;line-height:14px;color:#222;font-weight:bold;width:183px;text-align:center;">Khách Hàng</div>
<div class="t" style="left:256px;top:166.0px;font-size:10.5px;line-height:14px;color:#222;font-weight:bold;width:215px;text-align:center;">Dịch Vụ</div>
<div class="t" style="left:472px;top:166.0px;width:60px;overflow:hidden;font-size:10.5px;line-height:14px;font-weight:bold;color:#222;padding-left:1px">Thanh Toán</div>
<div class="t" style="left:533px;top:166.0px;font-size:10.5px;line-height:14px;color:#222;font-weight:bold;width:127px;text-align:center;">Doanh Thu</div>
<div class="t" style="left:661px;top:166.0px;font-size:10.5px;line-height:14px;color:#222;font-weight:bold;width:94px;text-align:center;">Ngày Điều Trị</div>
<div class="t" style="left:18px;top:192.5px;font-size:10.5px;line-height:14px;color:#222;width:53px;text-align:center;">1</div>
<div class="t" style="left:74px;top:192.5px;font-size:10.5px;line-height:14px;color:#222;">3T20000030 Quỳnh Lan</div>
<div class="t" style="left:256px;top:192.5px;font-size:10.5px;line-height:14px;color:#222;width:215px;text-align:center;">Lieu trinh dưỡng da 30 % làm mới</div>
<div class="t" style="left:472px;top:192.5px;font-size:10.5px;line-height:14px;color:#222;width:60px;text-align:center;">X</div>
<div class="t" style="left:533px;top:192.5px;font-size:10.5px;line-height:14px;color:#222;width:127px;text-align:center;">3,000,000</div>
<div class="t" style="left:661px;top:192.5px;font-size:10.5px;line-height:14px;color:#222;width:94px;text-align:center;">03-12-2020</div>
<div class="t" style="left:18px;top:216.0px;font-size:10.5px;line-height:14px;color:#222;width:53px;text-align:center;">2</div>
<div class="t" style="left:74px;top:216.0px;font-size:10.5px;line-height:14px;color:#222;">HOF0066440 Tạ Quang Thắng</div>
<div class="t" style="left:256px;top:216.0px;font-size:10.5px;line-height:14px;color:#222;width:215px;text-align:center;">Nho Rang Khon Moc Lech 20 % làm mới</div>
<div class="t" style="left:472px;top:216.0px;font-size:10.5px;line-height:14px;color:#222;width:60px;text-align:center;">X</div>
<div class="t" style="left:533px;top:216.0px;font-size:10.5px;line-height:14px;color:#222;width:127px;text-align:center;">400,000</div>
<div class="t" style="left:661px;top:216.0px;font-size:10.5px;line-height:14px;color:#222;width:94px;text-align:center;">04-12-2020</div>
<div class="t" style="left:18px;top:240.5px;font-size:10.5px;line-height:14px;color:#222;width:53px;text-align:center;">3</div>
<div class="t" style="left:74px;top:240.5px;font-size:10.5px;line-height:14px;color:#222;">HBT0000025 Dũng</div>
<div class="t" style="left:256px;top:240.5px;font-size:10.5px;line-height:14px;color:#222;width:215px;text-align:center;">Lieu trinh dưỡng da 0 % làm mới</div>
<div class="t" style="left:472px;top:240.5px;font-size:10.5px;line-height:14px;color:#222;width:60px;text-align:center;">X</div>
<div class="t" style="left:533px;top:240.5px;font-size:10.5px;line-height:14px;color:#222;width:127px;text-align:center;">0</div>
<div class="t" style="left:661px;top:240.5px;font-size:10.5px;line-height:14px;color:#222;width:94px;text-align:center;">10-12-2020</div>
<div class="t" style="left:18px;top:268.5px;font-size:10.5px;line-height:14px;color:#222;width:53px;text-align:center;">4</div>
<div class="t" style="left:74px;top:268.5px;font-size:10.5px;line-height:14px;color:#222;">THA0066504 Lâm Vĩ Dạ</div>
<div class="t" style="left:256px;top:268.5px;font-size:10.5px;line-height:14px;color:#222;width:215px;text-align:center;">Lieu trinh dưỡng da 0 % làm mới</div>
<div class="t" style="left:472px;top:268.5px;font-size:10.5px;line-height:14px;color:#222;width:60px;text-align:center;">X</div>
<div class="t" style="left:533px;top:268.5px;font-size:10.5px;line-height:14px;color:#222;width:127px;text-align:center;">0</div>
<div class="t" style="left:661px;top:268.5px;font-size:10.5px;line-height:14px;color:#222;width:94px;text-align:center;">21-12-2020</div>
<div class="t" style="left:18px;top:295.5px;font-size:10.5px;line-height:14px;color:#222;width:53px;text-align:center;">5</div>
<div class="t" style="left:74px;top:295.5px;font-size:10.5px;line-height:14px;color:#222;">THA0066504 Lâm Vĩ Dạ</div>
<div class="t" style="left:256px;top:295.5px;font-size:10.5px;line-height:14px;color:#222;width:215px;text-align:center;">Massage123456 50 % làm mới</div>
<div class="t" style="left:472px;top:295.5px;font-size:10.5px;line-height:14px;color:#222;width:60px;text-align:center;">X</div>
<div class="t" style="left:533px;top:295.5px;font-size:10.5px;line-height:14px;color:#222;width:127px;text-align:center;">250,000</div>
<div class="t" style="left:661px;top:295.5px;font-size:10.5px;line-height:14px;color:#222;width:94px;text-align:center;">21-12-2020</div>
<div class="t" style="left:18px;top:319.0px;font-size:10.5px;line-height:14px;color:#222;width:53px;text-align:center;">6</div>
<div class="t" style="left:74px;top:319.0px;font-size:10.5px;line-height:14px;color:#222;">SNA0000019 Nguyễn Thị Ngọc Ngân</div>
<div class="t" style="left:256px;top:319.0px;font-size:10.5px;line-height:14px;color:#222;width:215px;text-align:center;">Trị Nám 12 0 % làm mới</div>
<div class="t" style="left:472px;top:319.0px;font-size:10.5px;line-height:14px;color:#222;width:60px;text-align:center;">X</div>
<div class="t" style="left:533px;top:319.0px;font-size:10.5px;line-height:14px;color:#222;width:127px;text-align:center;">0</div>
<div class="t" style="left:661px;top:319.0px;font-size:10.5px;line-height:14px;color:#222;width:94px;text-align:center;">23-12-2020</div>
<div class="t" style="left:18px;top:340.5px;font-size:10.5px;line-height:14px;color:#222;width:53px;text-align:center;">7</div>
<div class="t" style="left:74px;top:340.5px;font-size:10.5px;line-height:14px;color:#222;">SNA0000019 Nguyễn Thị Ngọc Ngân</div>
<div class="t" style="left:256px;top:340.5px;font-size:10.5px;line-height:14px;color:#222;width:215px;text-align:center;">DICH VU DIEU TRI 1 0 % làm mới</div>
<div class="t" style="left:472px;top:340.5px;font-size:10.5px;line-height:14px;color:#222;width:60px;text-align:center;">X</div>
<div class="t" style="left:533px;top:340.5px;font-size:10.5px;line-height:14px;color:#222;width:127px;text-align:center;">0</div>
<div class="t" style="left:661px;top:340.5px;font-size:10.5px;line-height:14px;color:#222;width:94px;text-align:center;">24-12-2020</div>
<div class="t" style="left:18px;top:373.0px;font-size:10.5px;line-height:14px;color:#222;width:53px;text-align:center;">8</div>
<div class="t" style="left:74px;top:373.0px;font-size:10.5px;line-height:14px;color:#222;">HBT0066536 Hùng Lâm</div>
<div class="t" style="left:256px;top:373.0px;font-size:10.5px;line-height:14px;color:#222;width:215px;text-align:center;">Nho Rang Khon Moc Lech 24 50 % làm mới</div>
<div class="t" style="left:472px;top:373.0px;font-size:10.5px;line-height:14px;color:#222;width:60px;text-align:center;"></div>
<div class="t" style="left:533px;top:373.0px;font-size:10.5px;line-height:14px;color:#222;width:127px;text-align:center;">2,000,000</div>
<div class="t" style="left:661px;top:373.0px;font-size:10.5px;line-height:14px;color:#222;width:94px;text-align:center;">25-12-2020</div>
<div class="t" style="left:533px;top:406.0px;font-size:10.5px;line-height:14px;color:#222;font-weight:bold;width:127px;text-align:center;">Tổng Tiền (1-31/12/2020)</div>
<div class="t" style="left:533px;top:429.5px;font-size:10.5px;line-height:14px;color:#222;font-weight:bold;width:127px;text-align:center;">5,650,000</div>
<div class="b" style="left:255px;top:461px;width:218px;height:2px;background:#3f8b60"></div>
<div class="b" style="left:255px;top:475px;width:218px;height:2px;background:#3f8b60"></div>
<div class="b" style="left:255px;top:461px;width:2px;height:16px;background:#3f8b60"></div>
<div class="b" style="left:471px;top:461px;width:2px;height:16px;background:#3f8b60"></div>
<div class="b" style="left:470px;top:474px;width:4px;height:4px;background:#217346;border:1px solid #fff"></div>
<div class="b" style="left:1013px;top:146px;width:11px;height:377px;background:#e6e6e6"></div>
<div class="b" style="left:1013px;top:160px;width:4px;height:363px;background:#d6d6d6"></div>
<div class="b" style="left:1017px;top:148px;width:7px;height:375px;background:#fff;border-left:1px solid #d8d8d8;border-top:1px solid #d0d0d0"></div>
<div class="b" style="left:1016px;top:158px;width:8px;height:1px;background:#e0e0e0"></div>
<svg class="s" style="left:1018px;top:152px" width="5" height="3" viewBox="0 0 5 3"><path d="M0 3 L2.5 0 L5 3Z" fill="#777"/></svg>
</body></html>
